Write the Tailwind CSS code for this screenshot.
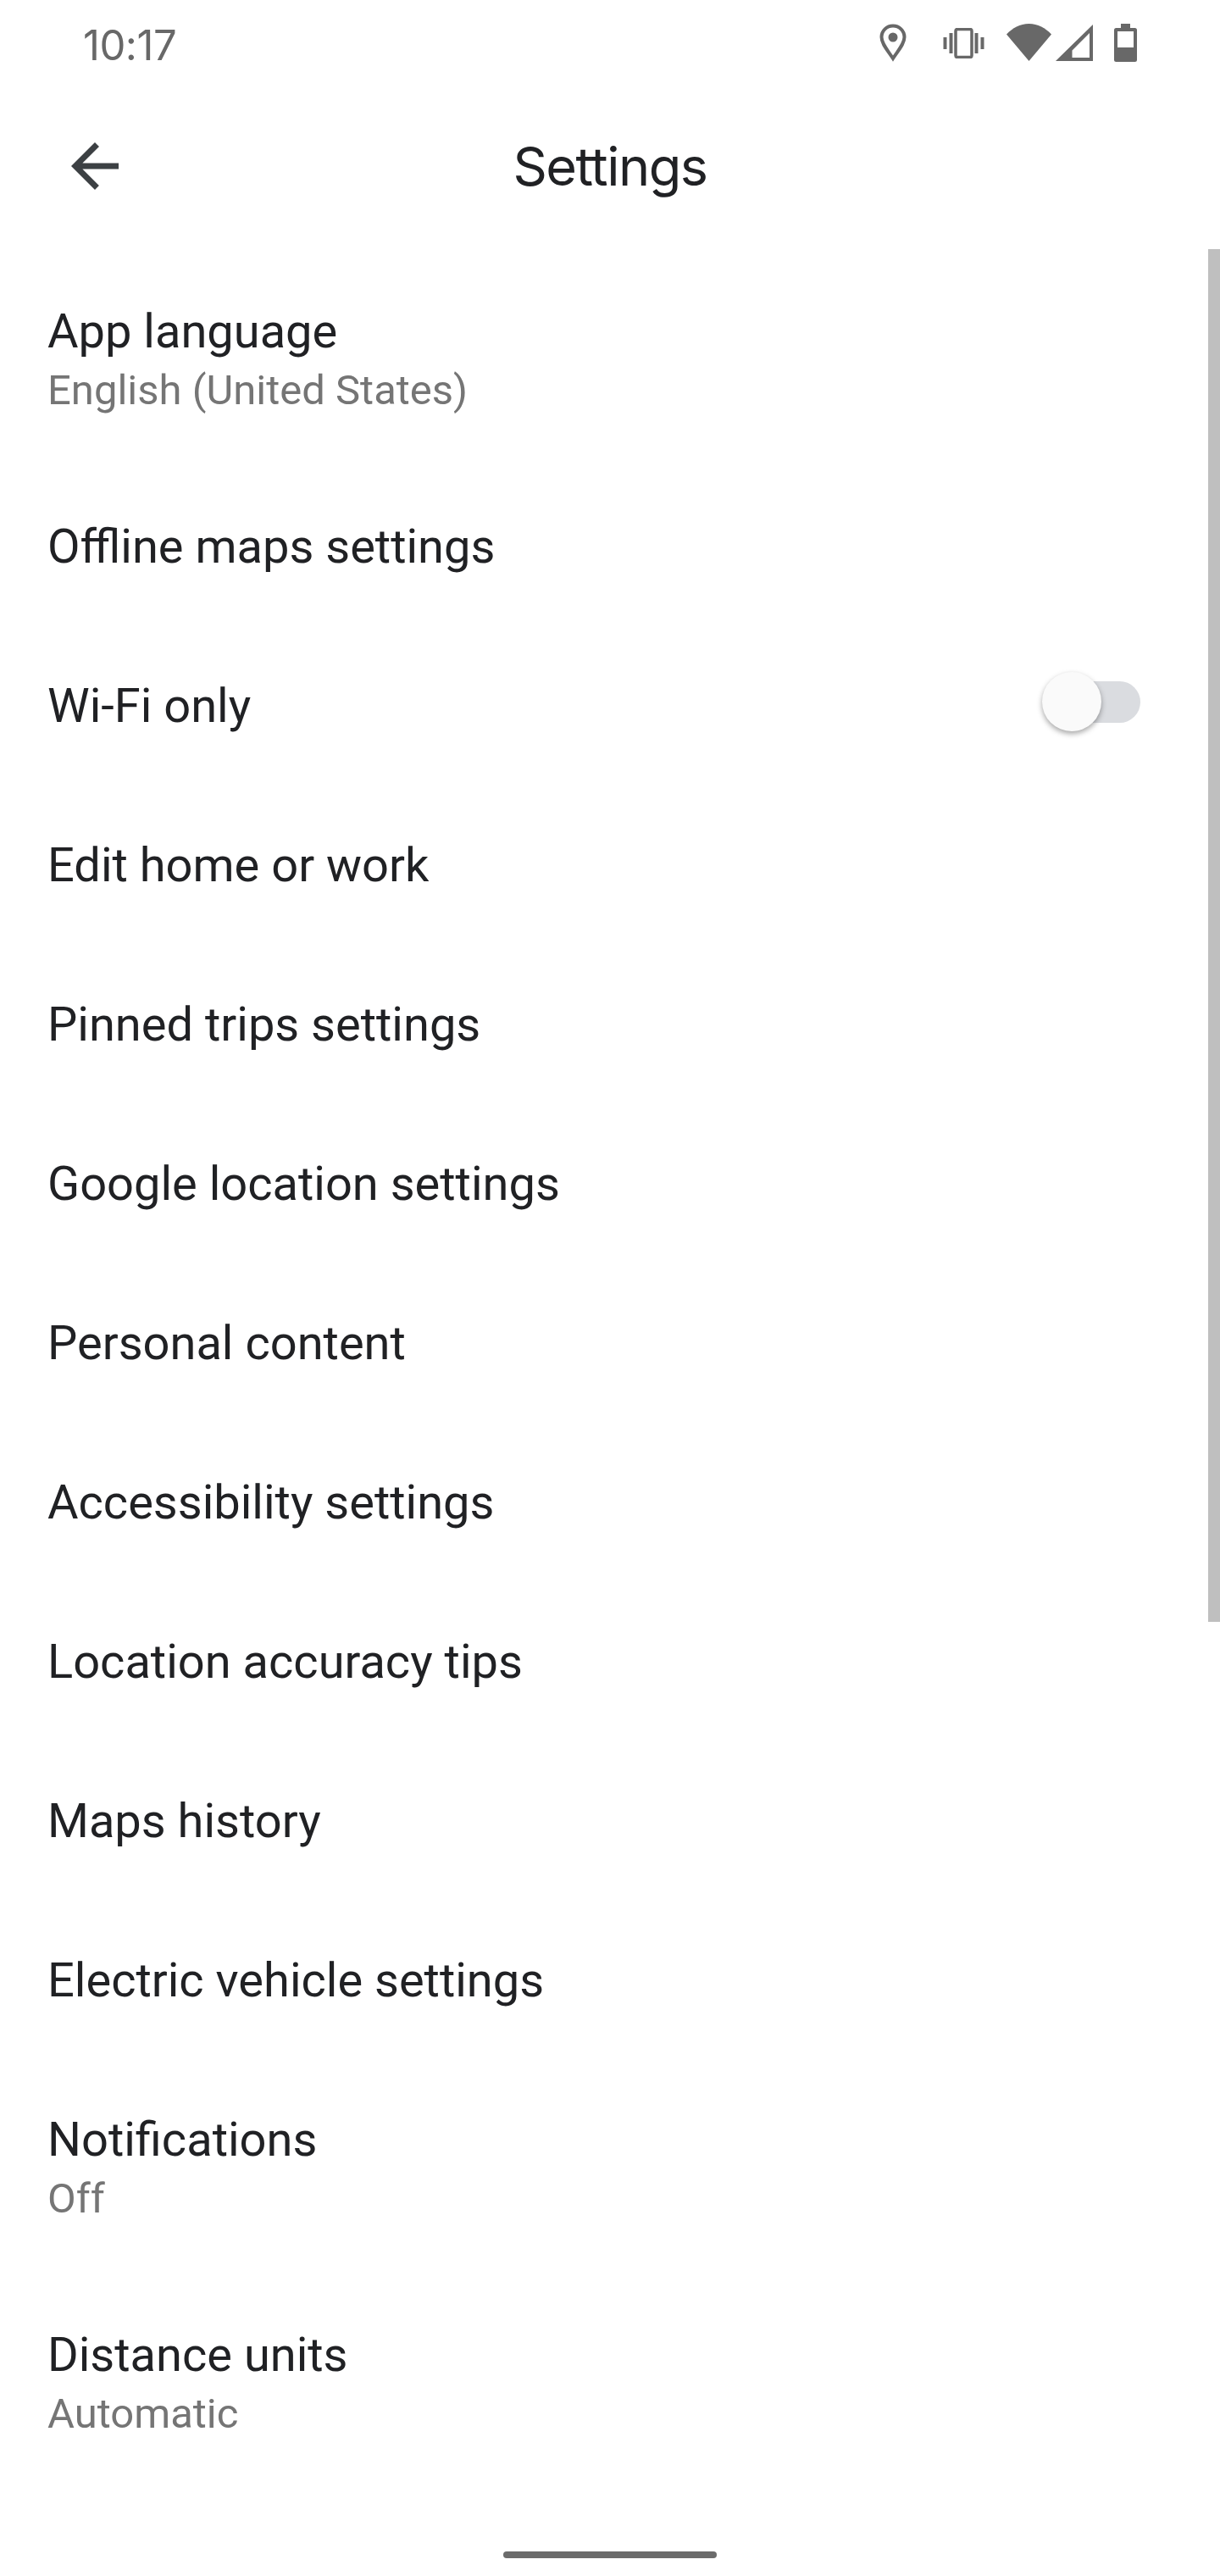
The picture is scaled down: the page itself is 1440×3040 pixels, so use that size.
<!DOCTYPE html>
<html lang="en">
  <head>
    <meta charset="UTF-8" />
    <title>Settings</title>
    <script src="https://cdn.jsdelivr.net/npm/@tailwindcss/browser@4"></script>
  </head>
  <body class="bg-white font-['Roboto',sans-serif]">
    <div class="relative w-[1440px] h-[3040px] overflow-hidden bg-white">
      <!-- status bar -->
      <div class="h-[104px] flex items-start pl-[98px] pr-[98px] text-[#686868]">
        <span class="mt-[25px] text-[49px] leading-[58px] font-['Inter',sans-serif] tracking-[-0.5px]">10:17</span>
        <div class="ml-auto mt-[28px] flex items-start">
          <svg class="w-[32px] h-[45px]" viewBox="0 0 32 45">
            <path d="M16 2.500C8.500 2.500 2.500 8.400 2.500 15.800c0 8 7.500 15.800 13.500 25.200 6-9.400 13.500-17.200 13.500-25.200C29.500 8.400 23.500 2.500 16 2.500z" fill="none" stroke="#686868" stroke-width="4" />
            <circle cx="16" cy="16" r="5.500" fill="#686868" />
          </svg>
          <svg class="ml-[43px] mt-[5px] w-[49px] h-[36px]" viewBox="0 0 49 36">
            <rect x="0.500" y="11" width="4" height="14" fill="#686868" />
            <rect x="7.500" y="6" width="4" height="24" fill="#686868" />
            <rect x="15" y="1.500" width="19" height="33" rx="2" fill="none" stroke="#686868" stroke-width="3.500" />
            <rect x="37.500" y="6" width="4" height="24" fill="#686868" />
            <rect x="44.500" y="11" width="4" height="14" fill="#686868" />
          </svg>
          <svg class="ml-[26px] w-[53px] h-[44px]" viewBox="0 0 53 44">
            <path d="M0 12.500C7 5 16 0 26.500 0S46 5 53 12.500L26.500 44z" fill="#686868" />
          </svg>
          <svg class="ml-[5px] mt-[1px] w-[44px] h-[43px]" viewBox="0 0 44 43">
            <path d="M44 0v43H0zM40 10 19.500 30.500V39H40z" fill="#686868" fill-rule="evenodd" />
          </svg>
          <svg class="ml-[25px] w-[27px] h-[45px]" viewBox="0 0 27 45">
            <path d="M8 0h11v5h5.500A2.500 2.500 0 0 1 27 7.500v35a2.500 2.500 0 0 1-2.500 2.500h-22A2.500 2.500 0 0 1 0 42.500v-35A2.500 2.500 0 0 1 2.500 5H8zM4 9v19h19V9z" fill="#686868" fill-rule="evenodd" />
          </svg>
        </div>
      </div>

      <!-- toolbar -->
      <div class="relative h-[190px] flex items-center justify-center">
        <svg class="absolute left-[84px] top-[64px] w-[56px] h-[56px]" viewBox="0 0 56 56">
          <path d="M56 24.500H13.400L33 4.900 28 0 0 28l28 28 4.900-4.900-19.500-19.600H56z" fill="#3c4043" />
        </svg>
        <span class="-mt-[6px] text-[63px] leading-[72px] text-[#202124] font-['Inter',sans-serif] tracking-[-1.500px]">Settings</span>
      </div>

      <!-- settings list -->
      <div class="flex flex-col text-[56px] leading-[70px] text-[#202124]">
        <div class="h-[254px] pl-[56px] pt-[62px] flex flex-col">
          <span>App language</span>
          <span class="text-[49px] text-[#757575]">English (United States)</span>
        </div>
        <div class="h-[188px] pl-[56px] pt-[62px]">Offline maps settings</div>
        <div class="h-[188px] pl-[56px] pt-[62px] pr-[94px] flex items-start justify-between">
          <span>Wi-Fi only</span>
          <span class="relative block w-[86px] h-[49px] mt-[6px] rounded-full bg-[#dadce0]">
            <span class="absolute -left-[30px] -top-[11px] block w-[70px] h-[70px] rounded-full bg-[#fafafa] shadow-[0_3px_6px_rgba(0,0,0,0.35)]"></span>
          </span>
        </div>
        <div class="h-[188px] pl-[56px] pt-[62px]">Edit home or work</div>
        <div class="h-[188px] pl-[56px] pt-[62px]">Pinned trips settings</div>
        <div class="h-[188px] pl-[56px] pt-[62px]">Google location settings</div>
        <div class="h-[188px] pl-[56px] pt-[62px]">Personal content</div>
        <div class="h-[188px] pl-[56px] pt-[62px]">Accessibility settings</div>
        <div class="h-[188px] pl-[56px] pt-[62px]">Location accuracy tips</div>
        <div class="h-[188px] pl-[56px] pt-[62px]">Maps history</div>
        <div class="h-[188px] pl-[56px] pt-[62px]">Electric vehicle settings</div>
        <div class="h-[254px] pl-[56px] pt-[62px] flex flex-col">
          <span>Notifications</span>
          <span class="text-[49px] text-[#757575]">Off</span>
        </div>
        <div class="h-[254px] pl-[56px] pt-[62px] flex flex-col">
          <span>Distance units</span>
          <span class="text-[49px] text-[#757575]">Automatic</span>
        </div>
      </div>

      <!-- scrollbar -->
      <div class="absolute right-0 top-[294px] w-[14px] h-[1620px] bg-[#bfbfbf]"></div>
      <!-- home indicator -->
      <div class="absolute left-[594px] top-[3011px] w-[252px] h-[8px] rounded-full bg-[#6b6b6b]"></div>
    </div>
  </body>
</html>
